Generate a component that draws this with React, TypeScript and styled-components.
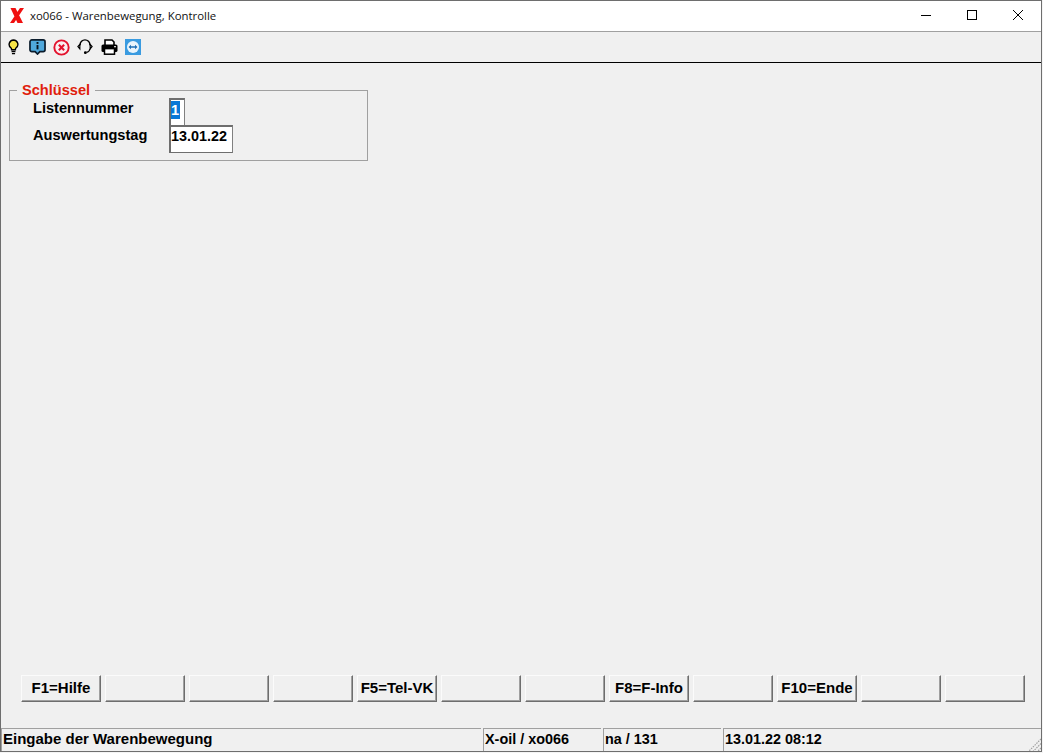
import React from "react";
import styled, { createGlobalStyle } from "styled-components";

const GlobalStyle = createGlobalStyle`
  html, body {
    margin: 0;
    padding: 0;
    height: 100%;
    background: #f4f4f4;
  }
  #root {
    height: 100%;
  }
`;

const fkeys = ["F1=Hilfe", "", "", "", "F5=Tel-VK", "", "", "F8=F-Info", "", "F10=Ende", "", ""];

const BulbIcon = () => (
  <svg width="11" height="16" viewBox="0 0 14 20">
    <path d="M7 1a5.6 5.6 0 0 0-3.4 10c.8.7 1 1.3 1 2.5h4.8c0-1.2.2-1.8 1-2.5A5.6 5.6 0 0 0 7 1z" fill="#f9e547" stroke="#000" strokeWidth="1.8" />
    <path d="M4.5 15.8h5M5 18.4h4" stroke="#000" strokeWidth="1.8" />
  </svg>
);

const InfoIcon = () => (
  <svg width="17" height="16" viewBox="0 0 18 17">
    <path d="M3 1h12a2 2 0 0 1 2 2v8.5a2 2 0 0 1-2 2h-3.5L9 16l-2.5-2.5H3a2 2 0 0 1-2-2V3a2 2 0 0 1 2-2z" fill="#4fa8dc" stroke="#0b1c2c" strokeWidth="1.8" />
    <rect x="8" y="3.2" width="2" height="2" fill="#08131d" />
    <rect x="8" y="6.4" width="2" height="4.6" fill="#08131d" />
  </svg>
);

const CancelIcon = () => (
  <svg width="17" height="17" viewBox="0 0 18 18">
    <circle cx="9" cy="9" r="7.6" fill="#fbeef0" stroke="#e3122d" strokeWidth="2" />
    <path d="M6.2 6.2l5.6 5.6M11.8 6.2l-5.6 5.6" stroke="#e3122d" strokeWidth="2.2" />
  </svg>
);

const HeadsetIcon = () => (
  <svg width="16" height="16" viewBox="0 0 18 18" fill="none">
    <path d="M3.5 7V6.5a5.5 5.5 0 0 1 11 0V7" stroke="#000" strokeWidth="1.6" />
    <path d="M3.2 6L1 8.5l2.2 2.6zM14.8 6L17 8.5l-2.2 2.6z" stroke="#000" strokeWidth="1.3" />
    <path d="M14.6 11c-.3 2.2-1.8 3.7-4 4" stroke="#000" strokeWidth="1.4" />
    <circle cx="9.4" cy="15.4" r="1.6" fill="#000" />
  </svg>
);

const PrinterIcon = () => (
  <svg width="17" height="16" viewBox="0 0 17 16">
    <path d="M4 1h7l2 2v4H4z" fill="#fff" stroke="#000" strokeWidth="1.6" />
    <rect x="0.5" y="5.5" width="16" height="7.5" rx="1.6" fill="#000" />
    <rect x="3.5" y="9.6" width="10" height="5.6" fill="#fff" stroke="#000" strokeWidth="1.5" />
    <rect x="13.2" y="7" width="1.6" height="1.3" fill="#fff" />
  </svg>
);

const RemoteIcon = () => (
  <svg width="16" height="16" viewBox="0 0 16 16">
    <rect width="16" height="16" fill="#3a9be0" />
    <circle cx="8" cy="8" r="6" fill="#eaf5fc" />
    <path d="M3.5 8L6 5.8v1.5h4V5.8L12.5 8 10 10.2V8.7H6v1.5z" fill="#1f6fb5" />
  </svg>
);

const AppLogo = () => (
  <svg width="14" height="15" viewBox="0 0 14 15">
    <path d="M0.5 0H5.5L13 15H7.5zM10 0h4L4 15H0z" fill="#f01010" />
  </svg>
);

const MinimizeIcon = () => (
  <svg width="10" height="10" viewBox="0 0 10 10" stroke="#000" strokeWidth="1">
    <path d="M0 5.5h10" />
  </svg>
);

const MaximizeIcon = () => (
  <svg width="10" height="10" viewBox="0 0 10 10" fill="none" stroke="#000" strokeWidth="1">
    <rect x="0.5" y="0.5" width="9" height="9" />
  </svg>
);

const CloseIcon = () => (
  <svg width="10" height="10" viewBox="0 0 10 10" stroke="#000" strokeWidth="1">
    <path d="M0 0l10 10M10 0L0 10" />
  </svg>
);

const Grip = () => (
  <svg width="14" height="14" viewBox="0 0 14 14" stroke="#a0a0a0" strokeWidth="1.2" strokeDasharray="1.5 1">
    <path d="M14 1L1 14M14 5.5L5.5 14M14 10L10 14" />
  </svg>
);

const App = () => {
  return (
    <>
      <GlobalStyle />
      <Window>
        <TitleBar>
          <TitleLeft>
            <AppLogo />
            <TitleText>xo066 - Warenbewegung, Kontrolle</TitleText>
          </TitleLeft>
          <WindowControls>
            <ControlButton><MinimizeIcon /></ControlButton>
            <ControlButton><MaximizeIcon /></ControlButton>
            <ControlButton><CloseIcon /></ControlButton>
          </WindowControls>
        </TitleBar>

        <Toolbar>
          <ToolButton><BulbIcon /></ToolButton>
          <ToolButton><InfoIcon /></ToolButton>
          <ToolButton><CancelIcon /></ToolButton>
          <ToolButton><HeadsetIcon /></ToolButton>
          <ToolButton><PrinterIcon /></ToolButton>
          <ToolButton><RemoteIcon /></ToolButton>
        </Toolbar>

        <Content>
          <KeyGroup>
            <GroupLegend>Schlüssel</GroupLegend>
            <FieldRow>
              <FieldLabel>Listennummer</FieldLabel>
              <ShortField><Selected>1</Selected></ShortField>
            </FieldRow>
            <FieldRow>
              <FieldLabel>Auswertungstag</FieldLabel>
              <DateField>13.01.22</DateField>
            </FieldRow>
          </KeyGroup>
        </Content>

        <KeyBar>
          {fkeys.map((label, i) => (
            <FKey key={i}>{label}</FKey>
          ))}
        </KeyBar>

        <StatusBar>
          <StatusCell $width={480} $size={15}>Eingabe der Warenbewegung</StatusCell>
          <StatusCell $width={118} $size={14.4}>X-oil / xo066</StatusCell>
          <StatusCell $width={118} $size={14.4}>na / 131</StatusCell>
          <LastCell $width={318} $size={14.4}>
            13.01.22 08:12
            <GripCorner><Grip /></GripCorner>
          </LastCell>
        </StatusBar>
      </Window>
    </>
  );
};

export default App;

const Window = styled.div`
  width: 1042px;
  height: 752px;
  box-sizing: border-box;
  border: 1px solid #6e6e6e;
  display: flex;
  flex-direction: column;
  overflow: hidden;
  background: #f0f0f0;
  font-family: "Liberation Sans", Arial, sans-serif;
  color: #000;
`;

const TitleBar = styled.div`
  height: 31px;
  flex: none;
  box-sizing: border-box;
  background: #fff;
  border-bottom: 1px solid #a0a0a0;
  display: flex;
  align-items: center;
  justify-content: space-between;
`;

const TitleLeft = styled.div`
  display: flex;
  align-items: center;
  gap: 6px;
  padding: 0 0 1px 9px;
`;

const TitleText = styled.span`
  font-family: "Open Sans", "Noto Sans", sans-serif;
  font-size: 11.4px;
  color: #111;
`;

const WindowControls = styled.div`
  display: flex;
  align-self: flex-start;
`;

const ControlButton = styled.div`
  width: 46px;
  height: 28px;
  display: flex;
  align-items: center;
  justify-content: center;
`;

const Toolbar = styled.div`
  height: 31px;
  flex: none;
  box-sizing: border-box;
  border-bottom: 1px solid #000;
  display: flex;
  align-items: center;
`;

const ToolButton = styled.div`
  width: 24px;
  display: flex;
  justify-content: center;
`;

const Content = styled.div`
  flex: 1;
  padding: 20px 0 0 8px;
`;

const KeyGroup = styled.fieldset`
  width: 359px;
  height: 78px;
  box-sizing: border-box;
  margin: 0;
  padding: 0 0 0 23px;
  border: 1px solid #a0a0a0;
  display: block;
`;

const GroupLegend = styled.legend`
  margin-left: -16px;
  padding: 0 5px;
  font-size: 14.6px;
  font-weight: bold;
  line-height: 15px;
  color: #e0200c;
`;

const FieldRow = styled.div`
  display: flex;
  align-items: flex-start;
`;

const FieldLabel = styled.div`
  width: 136px;
  padding-top: 1px;
  font-size: 14.6px;
  font-weight: bold;
  line-height: 19px;
`;

const ShortField = styled.div`
  width: 16px;
  height: 27px;
  box-sizing: border-box;
  border-style: solid;
  border-width: 2px 1px 0 2px;
  border-color: #6e6e6e #808080 #fff #6e6e6e;
  background: #fff;
  padding-top: 1px;
`;

const Selected = styled.span`
  display: block;
  width: 9px;
  background: #0a78d7;
  color: #fff;
  font-size: 14.6px;
  font-weight: bold;
  line-height: 18px;
`;

const DateField = styled.div`
  width: 64px;
  height: 28px;
  box-sizing: border-box;
  border-style: solid;
  border-width: 2px 1px 1px 2px;
  border-color: #6e6e6e #808080 #6e6e6e #6e6e6e;
  background: #fff;
  font-size: 14.4px;
  font-weight: bold;
  line-height: 19px;
`;

const KeyBar = styled.div`
  height: 53px;
  flex: none;
  box-sizing: border-box;
  padding-left: 20px;
  display: flex;
  gap: 4px;
`;

const FKey = styled.div`
  width: 80px;
  height: 27px;
  box-sizing: border-box;
  background: #f0f0f0;
  border: 1px solid;
  border-color: #fbfbfb #6e6e6e #6e6e6e #fbfbfb;
  box-shadow: inset -1px -1px 0 #a0a0a0;
  padding-bottom: 2px;
  display: flex;
  align-items: center;
  justify-content: center;
  font-size: 15px;
  font-weight: bold;
`;

const StatusBar = styled.div`
  height: 23px;
  flex: none;
  display: flex;
  gap: 2px;
  position: relative;
`;

const StatusCell = styled.div<{ $width: number; $size: number }>`
  width: ${(p) => p.$width}px;
  box-sizing: border-box;
  border-top: 1px solid #a0a0a0;
  border-left: 1px solid #a0a0a0;
  padding-left: 1px;
  font-size: ${(p) => p.$size}px;
  font-weight: bold;
  line-height: 20px;
  white-space: nowrap;
`;

const LastCell = styled(StatusCell)`
  flex: 1;
`;

const GripCorner = styled.div`
  position: absolute;
  right: 0;
  bottom: 0;
  height: 14px;
`;
